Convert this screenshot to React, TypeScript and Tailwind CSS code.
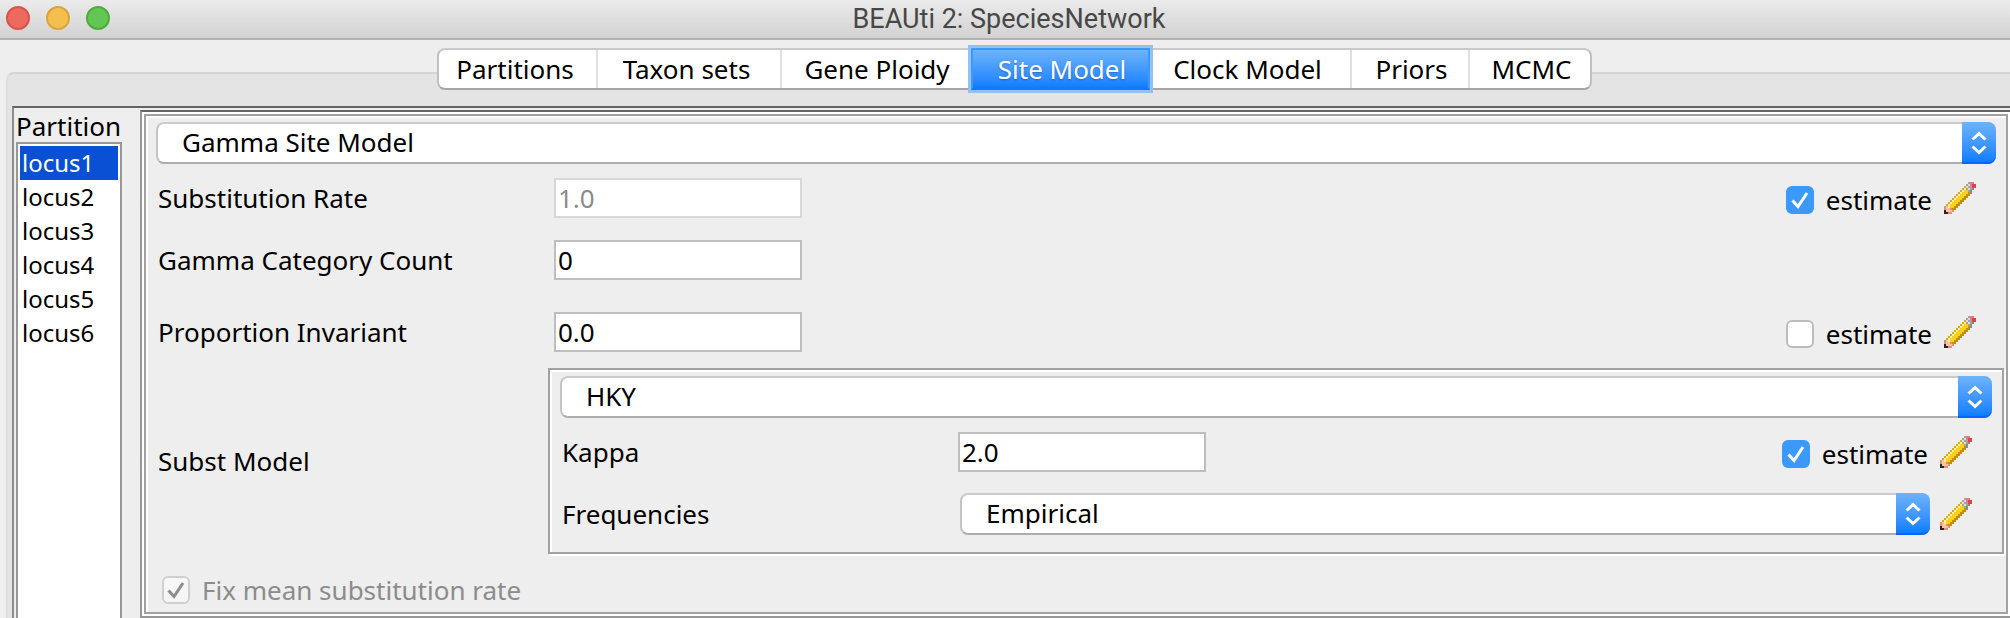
import { useId } from "react";

const tabs = [
  { name: "Partitions", width: "w-[159px] pr-1" },
  { name: "Taxon sets", width: "w-[184px] pr-1" },
  { name: "Gene Ploidy", width: "w-[189px] pl-1" },
  { name: "Site Model", width: "w-[179px] pl-1" },
  { name: "Clock Model", width: "w-[202px] pr-1" },
  { name: "Priors", width: "w-[118px] pl-1" },
  { name: "MCMC", width: "w-[120px] pl-1" },
];
const active = "Site Model";
const loci = ["locus1", "locus2", "locus3", "locus4", "locus5", "locus6"];

const pencilRows = [
  "............grr.",
  "...........gwrRR",
  "..........owggRR",
  ".........ocgwgG.",
  "........ocyygG..",
  ".......ocyyydG..",
  "......ocyyydd...",
  ".....ocyyydd....",
  "....ocyyydd.....",
  "...ocyyydd......",
  "..ocyyydd.......",
  ".ocyyydd........",
  "Ppcyydd.........",
  "PppPdd..........",
  "kpppP...........",
  "kkPP............",
];
const pencilColors: Record<string, string> = {
  g: "#a3a3a3",
  w: "#dcdcdc",
  G: "#8a8a8a",
  r: "#f2777b",
  R: "#dc444c",
  o: "#d9a81c",
  c: "#fff2a8",
  y: "#fbd01c",
  d: "#c48e06",
  p: "#fbc3a4",
  P: "#e58f6c",
  k: "#2b2422",
};

function Pencil() {
  return (
    <button type="button" aria-label="Edit" className="size-8 shrink-0">
      <svg viewBox="0 0 16 16" className="size-8" shapeRendering="crispEdges">
        {pencilRows.flatMap((row, y) =>
          [...row].map((c, x) =>
            c === "." ? null : <rect key={`${x}-${y}`} x={x} y={y} width="1" height="1" fill={pencilColors[c]} />,
          ),
        )}
      </svg>
    </button>
  );
}

function Check({ label, checked, disabled }: { label: string; checked?: boolean; disabled?: boolean }) {
  const id = useId();
  return (
    <span className="flex items-center gap-3">
      <span className="relative flex size-7">
        <input
          id={id}
          type="checkbox"
          defaultChecked={checked}
          disabled={disabled}
          className="peer size-7 appearance-none rounded-md border-2 border-[#bcbcbc] bg-white checked:border-[#3b99fc] checked:bg-[#3b99fc] disabled:border-[#cfcfcf] disabled:bg-[#f6f6f6]"
        />
        <svg
          viewBox="0 0 28 28"
          className="pointer-events-none absolute inset-0 hidden size-7 text-white peer-checked:block peer-disabled:text-[#8e8e8e]"
          fill="none"
          stroke="currentColor"
          strokeWidth="3"
        >
          <path d="M6.500 14.500L12 20.500L21 7" />
        </svg>
      </span>
      <label htmlFor={id} className={disabled ? "text-[#8c8c8c]" : "text-black"}>
        {label}
      </label>
    </span>
  );
}

function Select({ id, label, value, options }: { id: string; label?: string; value: string; options: string[] }) {
  return (
    <div className="relative min-w-0 flex-1">
      <select
        id={id}
        aria-label={label}
        defaultValue={value}
        className="block h-[42px] w-full appearance-none rounded-lg border-2 border-t-[#cbcbcb] border-r-[#cbcbcb] border-b-[#aeaeae] border-l-[#c4c4c4] bg-white pb-0.5 pl-6 leading-8 text-black"
      >
        {options.map((o) => (
          <option key={o}>{o}</option>
        ))}
      </select>
      <span className="pointer-events-none absolute inset-y-0 right-0 flex w-[34px] items-center justify-center rounded-r-lg border-b-2 border-[#0a62ff] bg-linear-to-b from-[#6cb3fa] to-[#087dff]">
        <svg viewBox="0 0 16 24" className="mt-0.5 h-6 w-4" fill="none" stroke="white" strokeWidth="3">
          <path d="M1.500 8.500L8 2.500L14.500 8.500M1.500 15.500L8 21.500L14.500 15.500" />
        </svg>
      </span>
    </div>
  );
}

function Field({ id, value, disabled }: { id: string; value: string; disabled?: boolean }) {
  return (
    <input
      id={id}
      type="text"
      defaultValue={value}
      disabled={disabled}
      className="h-10 w-[248px] border-2 border-[#bfbfbf] bg-white px-0.5 text-black disabled:border-[#d8d8d8] disabled:text-[#8c8c8c]"
    />
  );
}

function Estimate({ checked }: { checked?: boolean }) {
  return (
    <div className="ml-auto flex items-center gap-3">
      <div className="pt-1">
        <Check label="estimate" checked={checked} />
      </div>
      <Pencil />
    </div>
  );
}

const etched =
  "border-2 border-[#a2a2a2] shadow-[inset_2px_2px_0_#fff,2px_2px_0_#fff]";

export default function App() {
  return (
    <div className="flex h-screen flex-col overflow-hidden bg-[#eeeeee] font-['Noto_Sans',sans-serif] text-[26px] leading-8 text-black">
      <header className="relative flex h-10 shrink-0 items-center justify-center border-b-2 border-[#b1b1b1] bg-linear-to-b from-[#ebebeb] to-[#d2d2d2]">
        <div className="absolute left-1.5 top-1.5 flex gap-4">
          <button type="button" aria-label="Close" className="size-6 rounded-full border-2 border-[#dd5248] bg-[#ee6a5f]" />
          <button type="button" aria-label="Minimize" className="size-6 rounded-full border-2 border-[#dba43b] bg-[#f5bf4f]" />
          <button type="button" aria-label="Zoom" className="size-6 rounded-full border-2 border-[#4fab3c] bg-[#62c655]" />
        </div>
        <h1 className="pl-2 font-['Roboto',sans-serif] text-[27px] text-[#474747]">BEAUti 2: SpeciesNetwork</h1>
      </header>

      <main className="flex min-h-0 flex-1 flex-col pl-1.5 pt-8">
        <div className="flex min-h-0 flex-1 flex-col rounded-tl-lg border-l-2 border-t-2 border-l-[#dedede] border-t-[#d5d5d5] bg-[#e4e4e4] pl-1">
          <nav role="tablist" className="-mt-[26px] mb-4 flex justify-center pl-1.5">
            <div className="flex h-[42px] rounded-lg border-2 border-t-[#c9c9c9] border-r-[#c0c0c0] border-b-[#a6a6a6] border-l-[#c0c0c0] bg-white">
              {tabs.map((t) =>
                t.name === active ? (
                  <button
                    key={t.name}
                    type="button"
                    role="tab"
                    aria-selected="true"
                    className={`${t.width} -my-0.5 border-2 border-[#3f97f8] border-b-[#1477f5] bg-linear-to-b from-[#6cb3fa] to-[#087dff] text-white ring-3 ring-[#94c1f3] text-shadow-[0_1px_2px_#0004]`}
                  >
                    {t.name}
                  </button>
                ) : (
                  <button
                    key={t.name}
                    type="button"
                    role="tab"
                    aria-selected="false"
                    className={`${t.width} border-[#e0e0e0] not-last:border-r-2`}
                  >
                    {t.name}
                  </button>
                ),
              )}
            </div>
          </nav>

          <div className="flex min-h-0 flex-1 border-l-2 border-t-2 border-l-[#8e8e8e] border-t-[#646464] bg-[#eeeeee]">
            <aside className="flex w-[108px] shrink-0 flex-col pl-0.5">
              <h2 className="pt-0.5">Partition</h2>
              <ul className="flex-1 border-x-2 border-t-2 border-[#979797] bg-white p-0.5 text-2xl leading-[34px]">
                {loci.map((l) => (
                  <li key={l}>
                    <button
                      type="button"
                      className={l === "locus1" ? "w-full bg-[#0a50d4] pl-0.5 text-left text-white" : "w-full pl-0.5 text-left"}
                    >
                      {l}
                    </button>
                  </li>
                ))}
              </ul>
            </aside>

            <section className="ml-[18px] mt-0.5 flex flex-1 flex-col border-y-2 border-l-2 border-b-[#979797] border-l-[#979797] border-t-[#646464] bg-white p-0.5">
              <form className={`flex flex-1 flex-col bg-[#eeeeee] pl-2.5 pr-0.5 pt-1.5 ${etched}`}>
                <div className="mr-2 flex">
                  <Select
                    id="site-model"
                    label="Site model"
                    value="Gamma Site Model"
                    options={["Gamma Site Model"]}
                  />
                </div>
                <div className="flex h-[68px] items-center pr-7">
                  <label htmlFor="rate" className="w-[398px] pl-0.5">Substitution Rate</label>
                  <Field id="rate" value="1.0" disabled />
                  <Estimate checked />
                </div>
                <div className="flex h-14 items-center pr-7">
                  <label htmlFor="gamma" className="w-[398px] pl-0.5">Gamma Category Count</label>
                  <Field id="gamma" value="0" />
                </div>
                <div className="mt-2 flex h-[72px] items-center pr-7">
                  <label htmlFor="invariant" className="w-[398px] pl-0.5">Proportion Invariant</label>
                  <Field id="invariant" value="0.0" />
                  <Estimate />
                </div>
                <div className="flex items-center">
                  <span className="w-[392px] pl-0.5">Subst Model</span>
                  <div className={`flex-1 px-2.5 pb-2.5 pt-1.5 ${etched}`}>
                    <div className="flex">
                      <Select id="subst-model" label="Substitution model" value="HKY" options={["HKY"]} />
                    </div>
                    <div className="flex h-[68px] items-center pr-5">
                      <label htmlFor="kappa" className="w-[398px] pl-0.5">Kappa</label>
                      <Field id="kappa" value="2.0" />
                      <Estimate checked />
                    </div>
                    <div className="flex h-14 items-center gap-2.5 pr-5">
                      <label htmlFor="frequencies" className="w-[390px] pl-0.5">Frequencies</label>
                      <Select id="frequencies" value="Empirical" options={["Empirical"]} />
                      <Pencil />
                    </div>
                  </div>
                </div>
                <div className="pl-1.5 pt-5">
                  <Check label="Fix mean substitution rate" checked disabled />
                </div>
              </form>
            </section>
          </div>
        </div>
      </main>
    </div>
  );
}
